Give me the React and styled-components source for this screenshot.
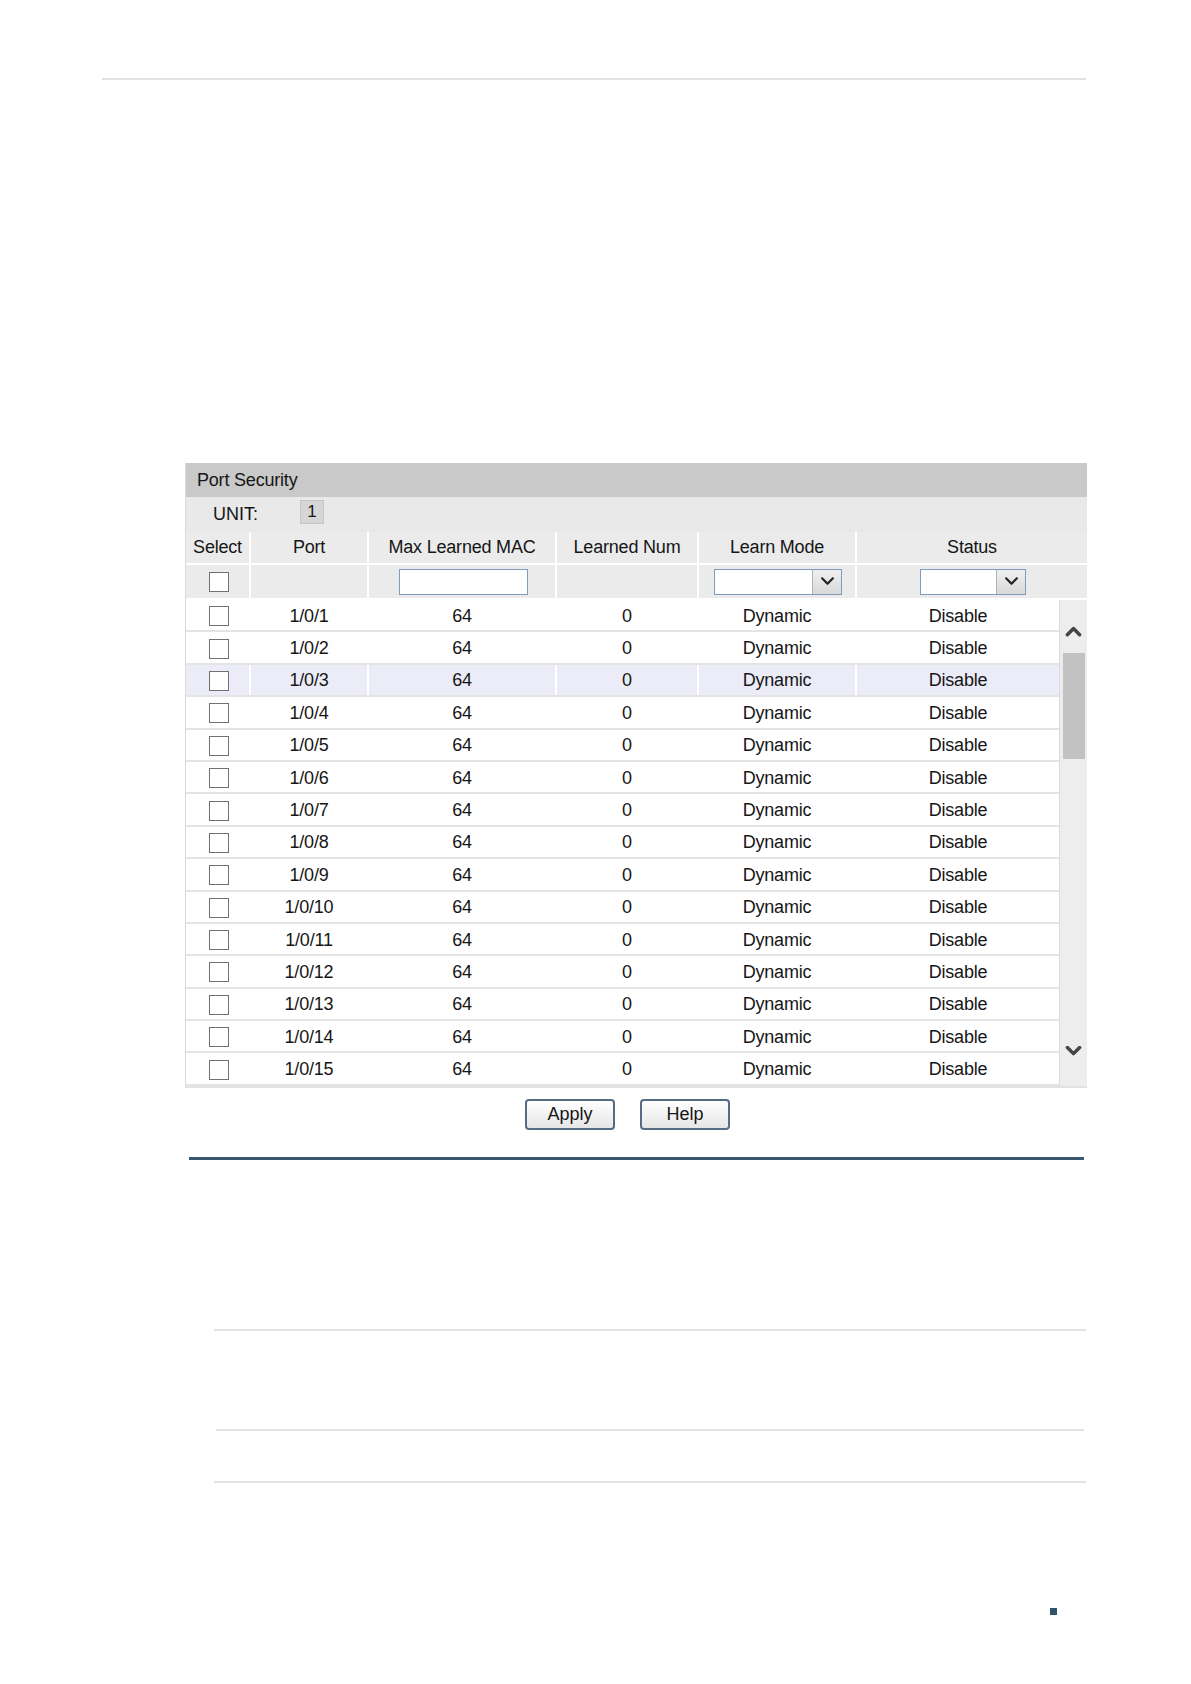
import React from "react";
import styled, { createGlobalStyle } from "styled-components";

const GlobalStyle = createGlobalStyle`
  html, body {
    margin: 0;
    padding: 0;
    background: #ffffff;
  }
  body {
    font-family: "Liberation Sans", Arial, sans-serif;
    color: #161616;
  }
`;

const Page = styled.div`
  position: relative;
  width: 1191px;
  height: 1684px;
  overflow: hidden;
  padding-top: 78px;
  box-sizing: border-box;
`;

const Rule = styled.div`
  height: ${(p) => p.$thick || 2}px;
  background: ${(p) => p.$color || "#e2e3e3"};
  margin-left: ${(p) => p.$left}px;
  width: ${(p) => p.$width}px;
  margin-top: ${(p) => p.$top || 0}px;
`;

const Panel = styled.div`
  margin-top: 383px;
  margin-left: 185px;
  width: 902px;
  border-left: 1px solid #dadada;
  border-bottom: 2px solid #e2e2e2;
  box-sizing: border-box;
  font-size: 18px;
`;

const TitleBar = styled.div`
  height: 34px;
  background: #c9c9c9;
  display: flex;
  align-items: center;
  padding-left: 11px;
  letter-spacing: -0.2px;
`;

const UnitRow = styled.div`
  height: 35px;
  background: #e9e9e9;
  display: flex;
  align-items: center;
  padding-left: 27px;
`;

const UnitLabel = styled.span`
  width: 86px;
`;

const UnitBox = styled.span`
  width: 24px;
  height: 24px;
  background: #d6d6d6;
  border: 1px solid #ececec;
  box-shadow: inset 0 0 0 1px #c4c4c4;
  display: flex;
  align-items: center;
  justify-content: center;
  font-size: 17px;
  margin-top: -6px;
`;

const cols = "63px 118px 188px 142px 158px 232px";

const HeadRow = styled.div`
  display: grid;
  grid-template-columns: ${cols};
  height: ${(p) => p.$h}px;
  background: #ebebeb;
`;

const HeadCell = styled.div`
  display: flex;
  align-items: center;
  justify-content: center;
  border-left: ${(p) => (p.$first ? "none" : "2px solid #ffffff")};
  border-bottom: 2px solid #ffffff;
  letter-spacing: -0.2px;
`;

const Body = styled.div`
  display: flex;
  height: 486px;
`;

const Rows = styled.div`
  width: 873px;
  border-right: 1px solid #dcdcdc;
`;

const Row = styled.div`
  display: grid;
  grid-template-columns: 63px 118px 188px 142px 158px 204px;
  height: 32.4px;
  box-sizing: border-box;
  background: ${(p) => (p.$hl ? "#ececf9" : "#ffffff")};
  border-bottom: 2px solid #e4e4e4;
`;

const Cell = styled.div`
  display: flex;
  align-items: center;
  justify-content: center;
  border-left: ${(p) => (p.$first ? "none" : "2px solid #ffffff")};
  letter-spacing: -0.2px;
  padding-top: 2px;
`;

const Check = styled.span`
  width: 20px;
  height: 20px;
  box-sizing: border-box;
  border: 1.5px solid #717171;
  background: #ffffff;
  margin-left: 2px;
`;

const TextInput = styled.span`
  width: 129px;
  height: 26px;
  box-sizing: border-box;
  border: 1px solid #7f9cbd;
  background: #ffffff;
  margin-left: 2px;
`;

const Select = styled.span`
  width: ${(p) => p.$w}px;
  height: 26px;
  box-sizing: border-box;
  border: 1px solid #7f9cbd;
  background: #ffffff;
  display: flex;
  justify-content: flex-end;
  margin-left: 2px;
`;

const SelectArrow = styled.span`
  width: 28px;
  height: 100%;
  background: linear-gradient(#f0f0f0, #d8d8d8);
  border-left: 1px solid #a9b4c2;
  display: flex;
  align-items: center;
  justify-content: center;
`;

const ScrollBar = styled.div`
  width: 27px;
  background: #ededed;
  display: flex;
  flex-direction: column;
  align-items: center;
`;

const ScrollArrow = styled.div`
  height: ${(p) => p.$h}px;
  display: flex;
  align-items: center;
  justify-content: center;
  padding-top: ${(p) => p.$pt || 0}px;
  box-sizing: border-box;
`;

const Thumb = styled.div`
  width: 22px;
  height: 106px;
  background: #c2c2c2;
`;

const ScrollGap = styled.div`
  flex: 1;
`;

const ButtonBar = styled.div`
  display: flex;
  gap: 25px;
  margin-top: 11px;
  margin-left: 525px;
`;

const Button = styled.button`
  width: 90px;
  height: 31px;
  border: 2px solid #556d84;
  border-radius: 4px;
  background: linear-gradient(#ffffff, #e6e6e6);
  font-family: "Liberation Sans", Arial, sans-serif;
  font-size: 18px;
  color: #161616;
  padding: 0;
`;

const PageMark = styled.div`
  position: absolute;
  left: 1050px;
  top: 1608px;
  width: 7px;
  height: 7px;
  background: #33536b;
`;

const Chevron = ({ up, size = 16, stroke = 3, color = "#3a3a3a" }) => (
  <svg width={size} height={size * 0.6} viewBox="0 0 16 10">
    <polyline
      points={up ? "2,8.5 8,2.5 14,8.5" : "2,1.5 8,7.5 14,1.5"}
      fill="none"
      stroke={color}
      strokeWidth={stroke}
      strokeLinecap="round"
      strokeLinejoin="round"
    />
  </svg>
);

const ports = Array.from({ length: 15 }, (_, i) => `1/0/${i + 1}`);

export default function App() {
  return (
    <Page>
      <GlobalStyle />
      <Rule $left={102} $width={984} />

      <Panel>
        <TitleBar>Port Security</TitleBar>
        <UnitRow>
          <UnitLabel>UNIT:</UnitLabel>
          <UnitBox>1</UnitBox>
        </UnitRow>
        <HeadRow $h={33}>
          <HeadCell $first>Select</HeadCell>
          <HeadCell>Port</HeadCell>
          <HeadCell>Max Learned MAC</HeadCell>
          <HeadCell>Learned Num</HeadCell>
          <HeadCell>Learn Mode</HeadCell>
          <HeadCell>Status</HeadCell>
        </HeadRow>
        <HeadRow $h={35}>
          <HeadCell $first>
            <Check />
          </HeadCell>
          <HeadCell />
          <HeadCell>
            <TextInput />
          </HeadCell>
          <HeadCell />
          <HeadCell>
            <Select $w={128}>
              <SelectArrow>
                <Chevron size={15} stroke={2.4} color="#222" />
              </SelectArrow>
            </Select>
          </HeadCell>
          <HeadCell>
            <Select $w={106}>
              <SelectArrow>
                <Chevron size={15} stroke={2.4} color="#222" />
              </SelectArrow>
            </Select>
          </HeadCell>
        </HeadRow>
        <Body>
          <Rows>
            {ports.map((p, i) => (
              <Row key={p} $hl={i === 2}>
                <Cell $first>
                  <Check />
                </Cell>
                <Cell>{p}</Cell>
                <Cell>64</Cell>
                <Cell>0</Cell>
                <Cell>Dynamic</Cell>
                <Cell>Disable</Cell>
              </Row>
            ))}
          </Rows>
          <ScrollBar>
            <ScrollArrow $h={53} $pt={10}>
              <Chevron up size={17} stroke={3.4} color="#454545" />
            </ScrollArrow>
            <Thumb />
            <ScrollGap />
            <ScrollArrow $h={70}>
              <Chevron size={17} stroke={3.4} color="#454545" />
            </ScrollArrow>
          </ScrollBar>
        </Body>
      </Panel>

      <ButtonBar>
        <Button>Apply</Button>
        <Button>Help</Button>
      </ButtonBar>

      <Rule $left={189} $width={895} $thick={3} $color="#3b576d" $top={27} />
      <Rule $left={214} $width={872} $top={169} />
      <Rule $left={216} $width={868} $top={98} />
      <Rule $left={214} $width={872} $top={50} />

      <PageMark />
    </Page>
  );
}
